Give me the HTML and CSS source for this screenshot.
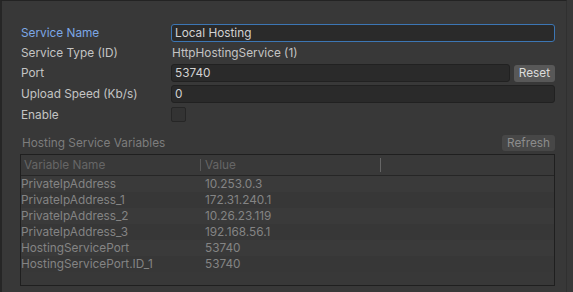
FILE: index.html
```html
<!DOCTYPE html>
<html lang="en">
<head>
	<meta charset="UTF-8">
	<title>Hosting Service</title>
	<link rel="stylesheet" href="styles.css">
</head>
<body>
	<div class="panel">
		<div class="fields">
			<div class="row">
				<label class="label focused">Service Name</label>
				<div class="input active">Local Hosting</div>
			</div>
			<div class="row">
				<label class="label">Service Type (ID)</label>
				<div class="value">HttpHostingService (1)</div>
			</div>
			<div class="row">
				<label class="label">Port</label>
				<div class="input">53740</div>
				<a class="btn">Reset</a>
			</div>
			<div class="row">
				<label class="label">Upload Speed (Kb/s)</label>
				<div class="input">0</div>
			</div>
			<div class="row">
				<label class="label">Enable</label>
				<span class="check"></span>
			</div>
		</div>

		<div class="vars_head">
			<span class="vars_title">Hosting Service Variables</span>
			<a class="btn disabled">Refresh</a>
		</div>

		<div class="table">
			<div class="thead">
				<span class="col_name">Variable Name</span>
				<span class="col_value">Value</span>
				<span class="col_end"></span>
			</div>
			<ul class="tbody">
				<li><span class="col_name">PrivateIpAddress</span><span class="col_value">10.253.0.3</span></li>
				<li><span class="col_name">PrivateIpAddress_1</span><span class="col_value">172.31.240.1</span></li>
				<li><span class="col_name">PrivateIpAddress_2</span><span class="col_value">10.26.23.119</span></li>
				<li><span class="col_name">PrivateIpAddress_3</span><span class="col_value">192.168.56.1</span></li>
				<li><span class="col_name">HostingServicePort</span><span class="col_value">53740</span></li>
				<li><span class="col_name">HostingServicePort.ID_1</span><span class="col_value">53740</span></li>
			</ul>
		</div>
	</div>
</body>
</html>
```

FILE: styles.css
```css
*{
	margin: 0;
	padding: 0;
	box-sizing: border-box;
}
html, body{
	height: 100%;
}
body{
	background-color: #383838;
	font-family: Inter, "Noto Sans", sans-serif;
	font-size: 11.8px;
	color: #c4c4c4;
	overflow: hidden;
}
.panel{
	height: 100%;
	border-top: 1px solid #232323;
	border-left: 2px solid #262626;
	border-right: 1px solid #303030;
	margin-right: 6px;
	padding: 23px 11px 0 19px;
}
.fields{
	display: flex;
	flex-direction: column;
}
.row{
	display: flex;
	align-items: flex-start;
	height: 20px;
}
.row:nth-child(n+4){
	margin-top: 1px;
}
.label{
	width: 150px;
	flex-shrink: 0;
	line-height: 18px;
}
.label.focused{
	color: #7ca7e6;
}
.value{
	padding-left: 1px;
	line-height: 18px;
}
.input{
	flex: 1;
	height: 18px;
	line-height: 16px;
	padding-left: 3px;
	background-color: #2a2a2a;
	border: 1px solid #212121;
	border-radius: 3px;
	color: #d2d2d2;
}
.input.active{
	border-color: #3c76b4;
}
.btn{
	display: block;
	height: 17px;
	margin: 1px 0 0 4px;
	padding: 0 5px;
	line-height: 17px;
	background-color: #585858;
	border-radius: 3px;
	color: #dcdcdc;
	cursor: pointer;
}
.btn.disabled{
	background-color: #474747;
	color: #8c8c8c;
}
.check{
	display: block;
	width: 15px;
	height: 15px;
	margin-top: 1px;
	background-color: #333;
	border: 1px solid #262626;
	border-radius: 2px;
}
.vars_head{
	display: flex;
	justify-content: space-between;
	align-items: center;
	height: 17px;
	margin-top: 8px;
	padding-left: 1px;
}
.vars_title{
	color: #7d7d7d;
}
.vars_head .btn{
	margin: 0;
	height: 16px;
	line-height: 16px;
}
.table{
	margin: 3px 0 0 -1px;
	height: 132px;
	border: 1px solid #1f1f1f;
	color: #848484;
}
.thead{
	display: flex;
	align-items: center;
	height: 21px;
	border-bottom: 1px solid #262626;
	background-color: #393939;
	color: #666;
}
.thead .col_name{
	padding-left: 3px;
}
.thead .col_value{
	border-left: 1px solid #5a5a5a;
	line-height: 12px;
	padding-left: 4px;
}
.thead .col_end{
	width: 1px;
	height: 14px;
	background-color: #666;
}
.col_name{
	width: 179px;
	flex-shrink: 0;
}
.col_value{
	width: 180px;
	flex-shrink: 0;
}
.tbody{
	list-style: none;
}
.tbody li{
	display: flex;
	height: 16px;
	line-height: 16px;
}
.tbody li:nth-child(odd){
	background-color: #3a3a3a;
}
.tbody li:nth-child(even){
	background-color: #373737;
}
.tbody .col_value{
	padding-left: 5px;
}
```
